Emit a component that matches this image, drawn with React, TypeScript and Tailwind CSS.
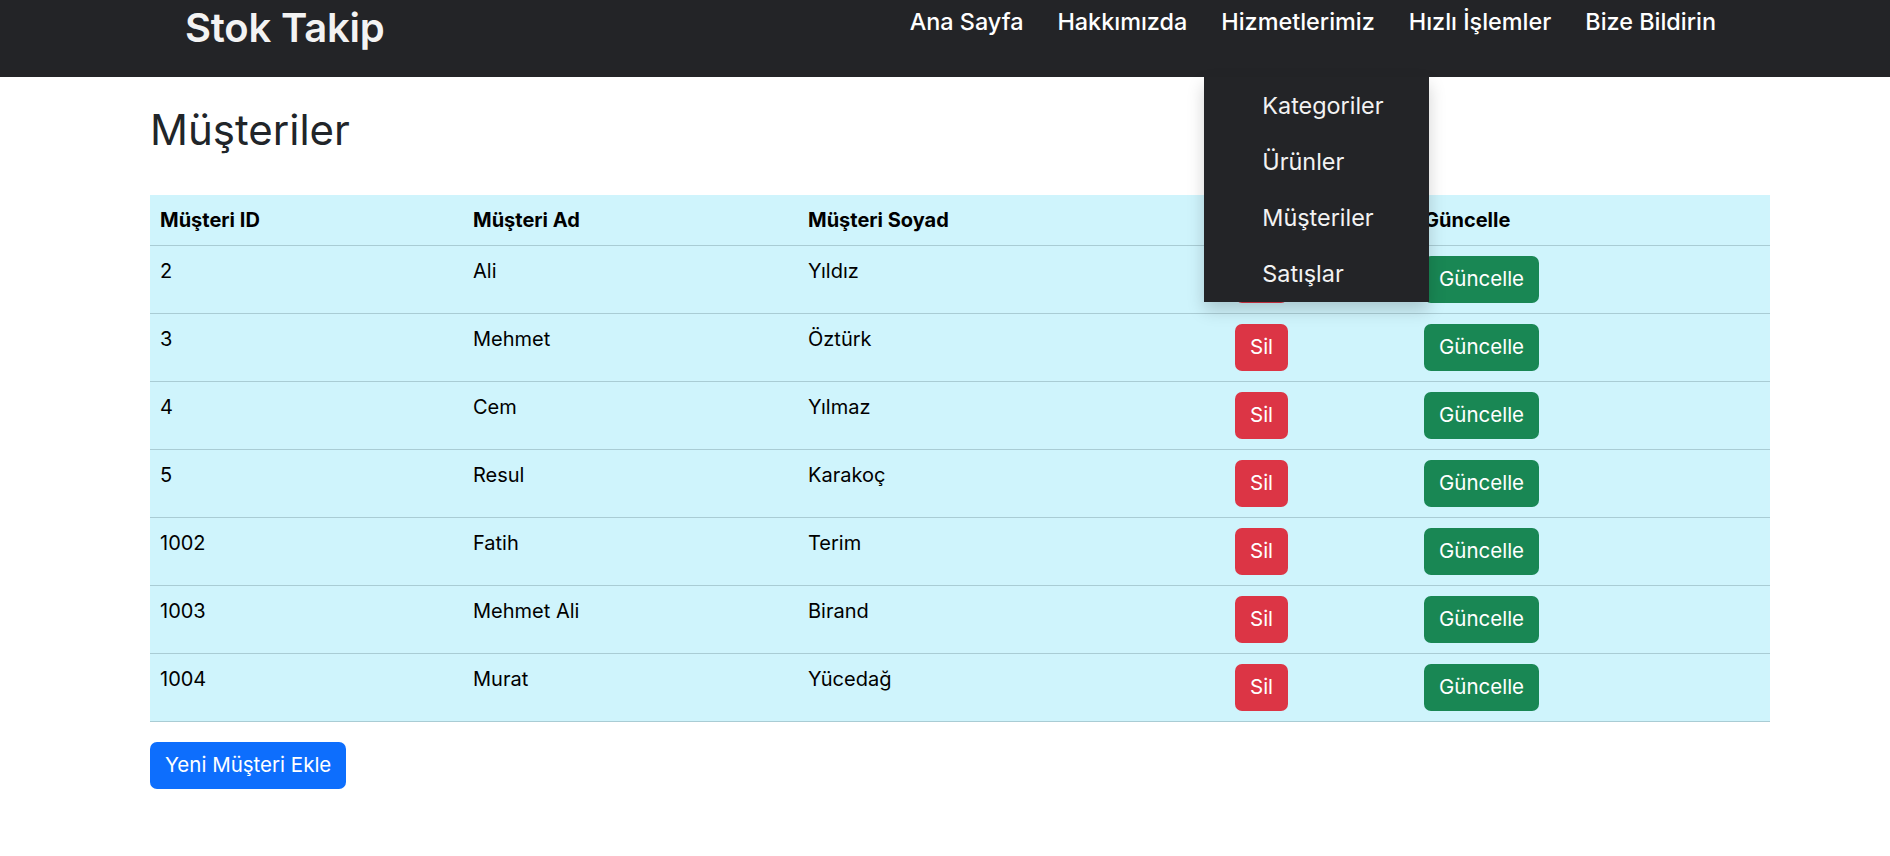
import { useState } from 'react';

type Customer = {
  id: number;
  name: string;
  surname: string;
};

const customers: Customer[] = [
  { id: 2, name: 'Ali', surname: 'Yıldız' },
  { id: 3, name: 'Mehmet', surname: 'Öztürk' },
  { id: 4, name: 'Cem', surname: 'Yılmaz' },
  { id: 5, name: 'Resul', surname: 'Karakoç' },
  { id: 1002, name: 'Fatih', surname: 'Terim' },
  { id: 1003, name: 'Mehmet Ali', surname: 'Birand' },
  { id: 1004, name: 'Murat', surname: 'Yücedağ' },
];

const navLinks = ['Ana Sayfa', 'Hakkımızda', 'Hizmetlerimiz', 'Hızlı İşlemler', 'Bize Bildirin'];
const serviceLinks = ['Kategoriler', 'Ürünler', 'Müşteriler', 'Satışlar'];

function Navbar() {
  const [open] = useState(true);

  return (
    <nav className="flex h-[77px] items-start bg-[#232427] pl-[185px] pr-[157px] text-[#f2f2f2]">
      <a href="#" className="mt-[5px] text-[40px] font-semibold leading-[46px] tracking-[-0.2px] text-[#f3f3f3]">
        Stok Takip
      </a>
      <ul className="ml-auto flex">
        {navLinks.map((link) => (
          <li key={link} className="relative">
            <a href="#" className="block px-[17px] pt-[6px] text-[23.4px] font-medium leading-[32px] text-white">
              {link}
            </a>
            {open && link === 'Hizmetlerimiz' && (
              <div className="absolute left-0 top-[77px] z-10 w-[225px] bg-[#232427] pt-px shadow-[0_8px_16px_rgba(0,0,0,0.18)]">
                {serviceLinks.map((item) => (
                  <a key={item} href="#" className="flex h-[56px] items-center pl-[58px] text-[23.4px] leading-[30px] text-[#f2f2f2]">
                    {item}
                  </a>
                ))}
              </div>
            )}
          </li>
        ))}
      </ul>
    </nav>
  );
}

export default function App() {
  return (
    <div className="min-h-screen bg-white font-['Inter',_'Noto_Sans',_sans-serif] text-[#212529]">
      <Navbar />

      <main className="ml-[150px] w-[1620px]">
        <h2 className="mt-[29px] mb-[41px] text-[42px] font-normal leading-[48px]">Müşteriler</h2>

        <table className="w-full table-fixed border-collapse bg-[#cff4fc] text-[20px] text-black">
          <colgroup>
            <col className="w-[313px]" />
            <col className="w-[335px]" />
            <col className="w-[427px]" />
            <col className="w-[189px]" />
            <col className="w-[356px]" />
          </colgroup>
          <thead>
            <tr className="h-[50px] border-b border-[#a9ccd4]">
              <th className="px-[10px] text-left font-bold leading-[30px]">Müşteri ID</th>
              <th className="px-[10px] text-left font-bold leading-[30px]">Müşteri Ad</th>
              <th className="px-[10px] text-left font-bold leading-[30px]">Müşteri Soyad</th>
              <th className="px-[10px] text-left font-bold leading-[30px]">Sil</th>
              <th className="px-[10px] text-left font-bold leading-[30px]">Güncelle</th>
            </tr>
          </thead>
          <tbody>
            {customers.map((customer) => (
              <tr key={customer.id} className="border-b border-[#a9ccd4]">
                <td className="px-[10px] py-[10px] align-top leading-[30px]">{customer.id}</td>
                <td className="px-[10px] py-[10px] align-top leading-[30px]">{customer.name}</td>
                <td className="px-[10px] py-[10px] align-top leading-[30px]">{customer.surname}</td>
                <td className="px-[10px] py-[10px] align-top">
                  <button type="button" className="h-[47px] rounded-[7px] bg-[#dc3545] px-[15px] text-[20.5px] leading-[30px] text-white">
                    Sil
                  </button>
                </td>
                <td className="px-[10px] py-[10px] align-top">
                  <button type="button" className="h-[47px] rounded-[7px] bg-[#198754] px-[15px] text-[20.5px] leading-[30px] text-white">
                    Güncelle
                  </button>
                </td>
              </tr>
            ))}
          </tbody>
        </table>

        <button type="button" className="mt-[20px] h-[47px] rounded-[7px] bg-[#0d6efd] px-[15px] text-[20.5px] leading-[30px] text-white">
          Yeni Müşteri Ekle
        </button>
      </main>
    </div>
  );
}
